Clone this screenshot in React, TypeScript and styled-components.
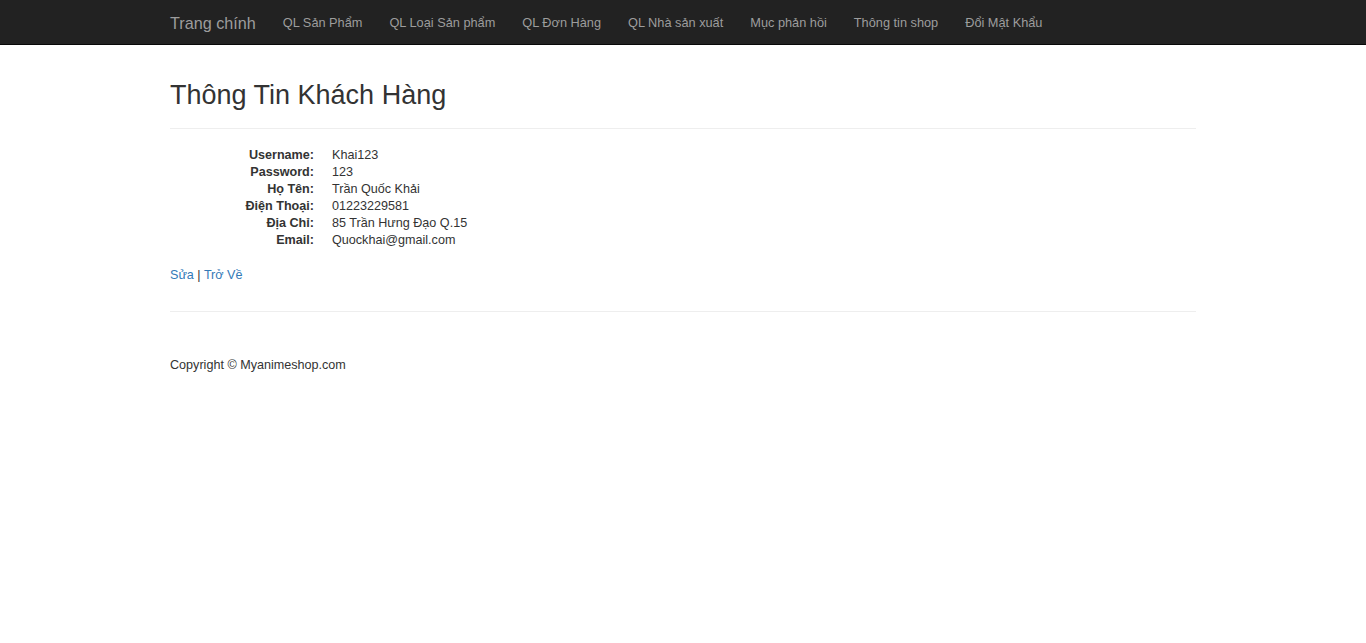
import React from "react";
import styled, { createGlobalStyle } from "styled-components";

const GlobalStyle = createGlobalStyle`
  html, body {
    margin: 0;
    padding: 0;
    background: #ffffff;
  }
  body {
    font-family: "Liberation Sans", Arial, Helvetica, sans-serif;
    font-size: 12.6px;
    line-height: 17px;
    color: #333333;
  }
  * { box-sizing: border-box; }
`;

const Navbar = styled.nav`
  height: 45px;
  background: #222222;
  border-bottom: 1px solid #080808;
`;

const NavInner = styled.div`
  width: 1026px;
  margin: 0 auto;
  display: flex;
  align-items: stretch;
  height: 44px;
`;

const Brand = styled.a`
  display: block;
  margin-left: -13.5px;
  padding: 14px 13.5px 12px;
  font-size: 16.2px;
  line-height: 18px;
  color: #9d9d9d;
  text-decoration: none;
`;

const NavList = styled.ul`
  display: flex;
  list-style: none;
  margin: 0;
  padding: 0;
`;

const NavLink = styled.a`
  display: block;
  padding: 14px 13.5px 12px;
  font-size: 12.75px;
  line-height: 18px;
  color: #9d9d9d;
  text-decoration: none;
`;

const Container = styled.main`
  width: 1026px;
  margin: 0 auto;
`;

const Title = styled.h2`
  margin: 35px 0 0;
  font-size: 27px;
  line-height: 30px;
  font-weight: 500;
  color: #333333;
`;

const Rule = styled.hr<{ $top: number; $bottom: number }>`
  margin: ${(p) => p.$top}px 0 ${(p) => p.$bottom}px;
  border: 0;
  border-top: 1px solid #eeeeee;
  height: 0;
`;

const DetailList = styled.dl`
  margin: 0;
  display: grid;
  grid-template-columns: 144px 1fr;
  column-gap: 18px;
`;

const Term = styled.dt`
  font-weight: 700;
  text-align: right;
  line-height: 17px;
  white-space: nowrap;
`;

const Value = styled.dd`
  margin: 0;
  line-height: 17px;
`;

const Actions = styled.p`
  margin: 18px 0 0;
  line-height: 17px;
`;

const Link = styled.a`
  color: #337ab7;
  text-decoration: none;
`;

const Footer = styled.footer`
  p {
    margin: 0;
    line-height: 17px;
  }
`;

const navItems = [
  "QL Sản Phẩm",
  "QL Loại Sản phẩm",
  "QL Đơn Hàng",
  "QL Nhà sản xuất",
  "Mục phản hồi",
  "Thông tin shop",
  "Đổi Mật Khẩu",
];

const details: [string, string][] = [
  ["Username:", "Khai123"],
  ["Password:", "123"],
  ["Họ Tên:", "Trần Quốc Khải"],
  ["Điện Thoại:", "01223229581"],
  ["Địa Chỉ:", "85 Trần Hưng Đạo Q.15"],
  ["Email:", "Quockhai@gmail.com"],
];

export default function App() {
  return (
    <>
      <GlobalStyle />
      <Navbar>
        <NavInner>
          <Brand href="#">Trang chính</Brand>
          <NavList>
            {navItems.map((n) => (
              <li key={n}>
                <NavLink href="#">{n}</NavLink>
              </li>
            ))}
          </NavList>
        </NavInner>
      </Navbar>
      <Container>
        <Title>Thông Tin Khách Hàng</Title>
        <Rule $top={18} $bottom={18} />
        <DetailList>
          {details.map(([k, v]) => (
            <React.Fragment key={k}>
              <Term>{k}</Term>
              <Value>{v}</Value>
            </React.Fragment>
          ))}
        </DetailList>
        <Actions>
          <Link href="#">Sửa</Link> | <Link href="#">Trở Về</Link>
        </Actions>
        <Rule $top={27} $bottom={45} />
        <Footer>
          <p>Copyright © Myanimeshop.com</p>
        </Footer>
      </Container>
    </>
  );
}
